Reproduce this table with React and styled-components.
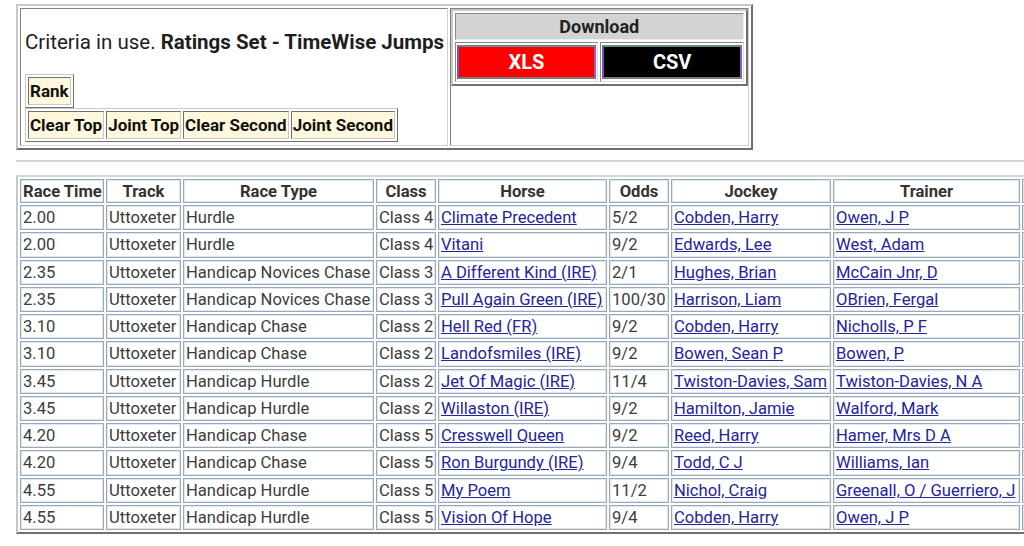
import styled, { createGlobalStyle } from "styled-components"

const GlobalStyle = createGlobalStyle`
body {
  margin: 0;
  background: #ffffff;
  font-family: Roboto, "Liberation Sans", sans-serif;
  overflow: hidden;
}
`;

const Page = styled.div`
padding: 4px 0 0 16px;
width: 1200px;
`;

const TopTable = styled.table`
border-collapse: separate;
border-spacing: 2px;
border: 2px solid;
border-color: #c8c8c8 #707070 #707070 #c8c8c8;
width: 737px;
height: 146px;
`;

const Cell = styled.td`
border: 1px solid;
border-color: #808080 #d0d0d0 #d0d0d0 #808080;
padding: 0;
vertical-align: ${props => props.valign || "middle"};
width: ${props => props.w}px;
`;

const Criteria = styled.div`
font-size: 20.5px;
color: #1e1e1e;
padding: 0 0 0 4px;
margin: 21px 0 20px;
white-space: nowrap;
b { font-weight: 700; }
`;

const ChoiceTable = styled.table`
border-collapse: separate;
border-spacing: 2px;
border: 1px solid;
border-color: #c8c8c8 #707070 #707070 #c8c8c8;
margin: 0 0 0 4px;
`;

const Choice = styled.td`
background: #fff8dc;
border: 1px solid;
border-color: #707070 #c8c8c8 #c8c8c8 #707070;
font-weight: 700;
font-size: 17px;
color: #111;
padding: 3px 1px;
white-space: nowrap;
`;

const DownloadTable = styled.table`
border-collapse: separate;
border-spacing: 2px;
border: 2px solid;
border-color: #c8c8c8 #707070 #707070 #c8c8c8;
width: 100%;
`;

const DownloadHead = styled.td`
background: #d3d3d3;
border: 1px solid;
border-color: #888 #eee #eee #888;
text-align: center;
font-weight: 700;
font-size: 18px;
color: #222;
height: 25px;
padding: 0;
`;

const ButtonCell = styled.td`
border: 1px solid;
border-color: #888 #ddd #ddd #888;
padding: 2px 1px;
width: 50%;
`;

const FileButton = styled.div`
background: ${props => props.bg};
color: #fff;
font-weight: 700;
font-size: 20px;
text-align: center;
height: 34px;
line-height: 30px;
border: 2px solid;
border-color: #6a8a8a #8860c8 #7a7a7a #7a4fc0;
box-sizing: border-box;
`;

const Rule = styled.div`
height: 2px;
background: #d4d4d4;
margin: 10px 0 13px;
`;

const DataTable = styled.table`
border-collapse: separate;
border-spacing: 2px;
border: 2px solid;
border-color: #d0d8e0 #707070 #707070 #c0c8d0;
table-layout: fixed;
width: 1100px;
font-size: 16.6px;
color: #3c3c3c;
`;

const Head = styled.th`
width: ${props => props.w}px;
box-sizing: border-box;
border: 1px solid #9aa8b6;
box-shadow: inset 0 0 0 1px #dce8f2;
font-weight: 700;
color: #333;
height: 24px;
padding: 0 2px;
white-space: nowrap;
overflow: hidden;
`;

const Data = styled.td`
border: 1px solid #9aa8b6;
box-shadow: inset 0 0 0 1px #dce8f2;
height: 23.25px;
padding: 0 2px;
white-space: nowrap;
overflow: hidden;
`;

const Link = styled.a`
color: #24249c;
text-decoration: underline;
`;

const columns = [
  ["Race Time", 84],
  ["Track", 75],
  ["Race Type", 191],
  ["Class", 60],
  ["Horse", 169],
  ["Odds", 60],
  ["Jockey", 160],
  ["Trainer", 187],
  ["", 90],
];

const rows = [
  ["2.00", "Hurdle", "Class 4", "Climate Precedent", "5/2", "Cobden, Harry", "Owen, J P"],
  ["2.00", "Hurdle", "Class 4", "Vitani", "9/2", "Edwards, Lee", "West, Adam"],
  ["2.35", "Handicap Novices Chase", "Class 3", "A Different Kind (IRE)", "2/1", "Hughes, Brian", "McCain Jnr, D"],
  ["2.35", "Handicap Novices Chase", "Class 3", "Pull Again Green (IRE)", "100/30", "Harrison, Liam", "OBrien, Fergal"],
  ["3.10", "Handicap Chase", "Class 2", "Hell Red (FR)", "9/2", "Cobden, Harry", "Nicholls, P F"],
  ["3.10", "Handicap Chase", "Class 2", "Landofsmiles (IRE)", "9/2", "Bowen, Sean P", "Bowen, P"],
  ["3.45", "Handicap Hurdle", "Class 2", "Jet Of Magic (IRE)", "11/4", "Twiston-Davies, Sam", "Twiston-Davies, N A"],
  ["3.45", "Handicap Hurdle", "Class 2", "Willaston (IRE)", "9/2", "Hamilton, Jamie", "Walford, Mark"],
  ["4.20", "Handicap Chase", "Class 5", "Cresswell Queen", "9/2", "Reed, Harry", "Hamer, Mrs D A"],
  ["4.20", "Handicap Chase", "Class 5", "Ron Burgundy (IRE)", "9/4", "Todd, C J", "Williams, Ian"],
  ["4.55", "Handicap Hurdle", "Class 5", "My Poem", "11/2", "Nichol, Craig", "Greenall, O / Guerriero, J"],
  ["4.55", "Handicap Hurdle", "Class 5", "Vision Of Hope", "9/4", "Cobden, Harry", "Owen, J P"],
];

const App = () => {
  return (
    <Page>
      <GlobalStyle />
      <TopTable>
        <tbody>
          <tr>
            <Cell w={425} valign="top">
              <Criteria>
                Criteria in use. <b>Ratings Set - TimeWise Jumps</b>
              </Criteria>
              <ChoiceTable>
                <tbody>
                  <tr><Choice>Rank</Choice></tr>
                </tbody>
              </ChoiceTable>
              <ChoiceTable>
                <tbody>
                  <tr>
                    <Choice>Clear Top</Choice>
                    <Choice>Joint Top</Choice>
                    <Choice>Clear Second</Choice>
                    <Choice>Joint Second</Choice>
                  </tr>
                </tbody>
              </ChoiceTable>
            </Cell>
            <Cell w={297} valign="top">
              <DownloadTable>
                <tbody>
                  <tr>
                    <DownloadHead colSpan={2}>Download</DownloadHead>
                  </tr>
                  <tr>
                    <ButtonCell><FileButton bg="#ff0000">XLS</FileButton></ButtonCell>
                    <ButtonCell><FileButton bg="#000000">CSV</FileButton></ButtonCell>
                  </tr>
                </tbody>
              </DownloadTable>
            </Cell>
          </tr>
        </tbody>
      </TopTable>
      <Rule />
      <DataTable>
        <thead>
          <tr>
            {columns.map(([name, w], i) => (
              <Head key={i} w={w}>{name}</Head>
            ))}
          </tr>
        </thead>
        <tbody>
          {rows.map((r, i) => (
            <tr key={i}>
              <Data>{r[0]}</Data>
              <Data>Uttoxeter</Data>
              <Data>{r[1]}</Data>
              <Data>{r[2]}</Data>
              <Data><Link href="#">{r[3]}</Link></Data>
              <Data>{r[4]}</Data>
              <Data><Link href="#">{r[5]}</Link></Data>
              <Data><Link href="#">{r[6]}</Link></Data>
              <Data></Data>
            </tr>
          ))}
        </tbody>
      </DataTable>
    </Page>
  )
}

export default App
